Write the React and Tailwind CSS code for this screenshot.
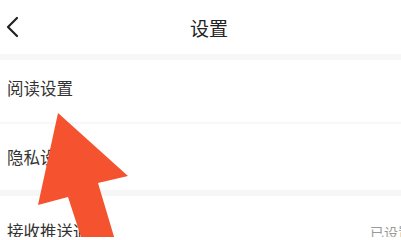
export default function App() {
  const font = { fontFamily: '"Noto Sans CJK SC", "Noto Sans", sans-serif' };

  return (
    <div
      className="relative w-[401px] h-[237px] overflow-hidden bg-white text-[#333]"
      style={font}
    >
      {/* header */}
      <div className="relative flex items-center h-[54px] bg-white">
        <svg
          className="ml-[6px]"
          width="14"
          height="22"
          viewBox="0 0 14 22"
          fill="none"
          stroke="#222"
          strokeWidth="2.2"
          strokeLinecap="round"
          strokeLinejoin="round"
        >
          <path d="M11 2 L2 11 L11 20" />
        </svg>
        <h1 className="absolute left-[190px] top-[15px] text-[19px] leading-[26px] text-[#222]">
          设置
        </h1>
      </div>

      <div className="h-[6px] bg-[#f7f7f7]" />

      {/* rows */}
      <div className="flex items-center h-[62px] pl-[7px] pb-[5px] text-[16.5px]">
        阅读设置
      </div>
      <div className="h-[2px] bg-[#f8f8f8]" />
      <div className="flex items-center h-[66px] pl-[7px] text-[16.5px]">
        隐私设置
      </div>

      <div className="h-[6px] bg-[#f6f6f6]" />

      <div className="flex items-start justify-between h-[66px] pl-[7px] pt-[23px]">
        <span className="text-[16.5px] leading-[24px]">接收推送通知</span>
        <span className="mr-[-11px] mt-[3px] text-[14px] leading-[20px] text-[#999]">
          已设置
        </span>
      </div>

      {/* arrow overlay */}
      <svg
        className="absolute left-0 top-0 pointer-events-none"
        width="401"
        height="237"
        viewBox="0 0 401 237"
      >
        <polygon
          points="58,113 128,176 98,183 115,240 82,240 68,197 38,205"
          fill="#f5522f"
        />
      </svg>
    </div>
  );
}
